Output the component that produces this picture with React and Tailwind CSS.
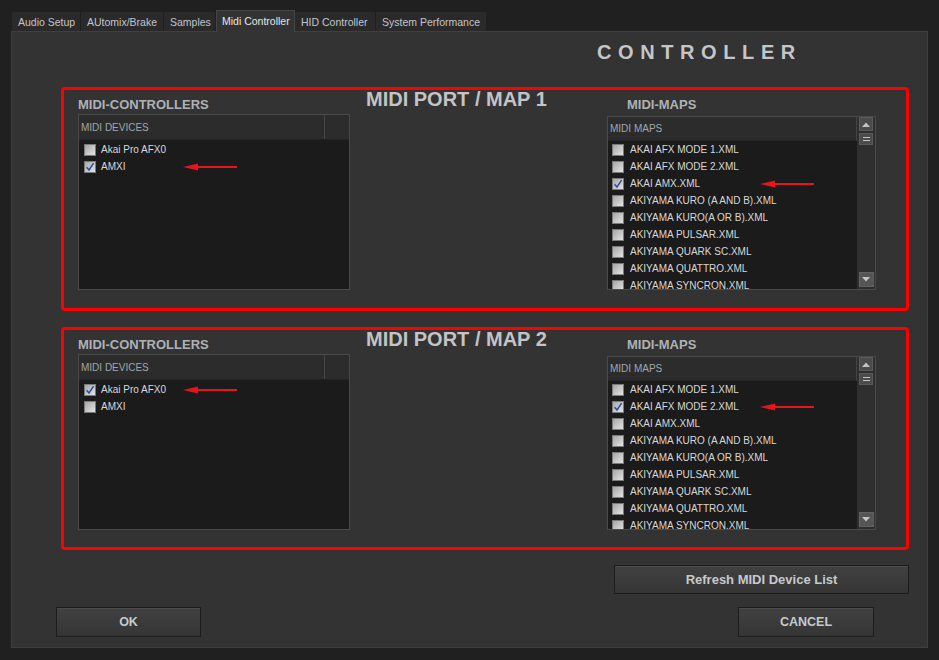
import React from "react";

const TABS = [
  { label: "Audio Setup", w: "w-[69px]" },
  { label: "AUtomix/Brake", w: "w-[83px]" },
  { label: "Samples", w: "w-[52px]" },
  { label: "Midi Controller", w: "w-[79px]", active: true },
  { label: "HID Controller", w: "w-[81px]" },
  { label: "System Performance", w: "w-[111px]" },
];

const MAPS = [
  "AKAI AFX MODE 1.XML",
  "AKAI AFX MODE 2.XML",
  "AKAI AMX.XML",
  "AKIYAMA KURO (A AND B).XML",
  "AKIYAMA KURO(A OR B).XML",
  "AKIYAMA PULSAR.XML",
  "AKIYAMA QUARK SC.XML",
  "AKIYAMA QUATTRO.XML",
  "AKIYAMA SYNCRON.XML",
];

const DEVICES = ["Akai Pro AFX0", "AMXI"];

function Check({ checked }) {
  return (
    <span className="w-[12px] h-[12px] shrink-0 border border-[#7a7a7a] bg-linear-to-br from-[#a6a6a6] to-[#e4e4e4] flex items-center justify-center">
      {checked && (
        <svg width="10" height="10" viewBox="0 0 10 10">
          <path d="M1.6 5.2 L4 8 L8.6 1.2" stroke="#2c4c9c" strokeWidth="1.4" fill="none" />
        </svg>
      )}
    </span>
  );
}

function Arrow({ className }) {
  return (
    <svg width="54" height="9" viewBox="0 0 54 9" className={className}>
      <polygon points="0,4.5 15,1 15,8" fill="#e8141c" />
      <rect x="14" y="3.5" width="40" height="2" fill="#e8141c" />
    </svg>
  );
}

function DeviceList({ checkedIndex }) {
  return (
    <div className="w-[272px] h-[176px] mt-[2px] border border-[#4a4a4a] bg-[#1b1b1b] flex flex-col">
      <div className="h-[25px] flex shrink-0 bg-[#2c2c2c] border-b border-[#242424]">
        <div className="w-[246px] flex items-center pl-[2px] border-r border-[#444] text-[10px] text-[#a2a6aa]">
          MIDI DEVICES
        </div>
        <div className="flex-1" />
      </div>
      <div className="flex flex-col pt-[1px]">
        {DEVICES.map((d, i) => (
          <div key={d} className="relative h-[17px] flex items-center pl-[5px] gap-[5px]">
            <Check checked={i === checkedIndex} />
            <span className="text-[10px] leading-[17px] text-[#d8d8d8]">{d}</span>
            {i === checkedIndex && (
              <Arrow className="absolute left-[104px] top-1/2 -translate-y-1/2" />
            )}
          </div>
        ))}
      </div>
    </div>
  );
}

function MapList({ checkedIndex }) {
  return (
    <div className="w-[269px] h-[174px] mt-[4px] border border-[#4a4a4a] bg-[#1b1b1b] flex">
      <div className="w-[249px] flex flex-col overflow-hidden">
        <div className="h-[24px] shrink-0 flex items-center pl-[2px] bg-[#2c2c2c] border-b border-[#242424] border-r border-r-[#444] text-[10px] text-[#a2a6aa]">
          MIDI MAPS
        </div>
        <div className="flex flex-col overflow-hidden">
          {MAPS.map((m, i) => (
            <div key={m} className="relative h-[17px] shrink-0 flex items-center pl-[4px] gap-[6px]">
              <Check checked={i === checkedIndex} />
              <span className="text-[10px] leading-[17px] text-[#d8d8d8] whitespace-nowrap">{m}</span>
              {i === checkedIndex && (
                <Arrow className="absolute left-[152px] top-1/2 -translate-y-1/2" />
              )}
            </div>
          ))}
        </div>
      </div>
      <div className="flex-1 bg-[#2f2f2f] flex flex-col items-center pb-[2px]">
        <div className="w-[14px] h-[14px] bg-[#4b4b4b] border border-[#5a5a5a] flex items-center justify-center">
          <svg width="8" height="5" viewBox="0 0 8 5">
            <polygon points="0,5 4,0.5 8,5" fill="#c4c4c4" />
          </svg>
        </div>
        <div className="w-[14px] h-[12px] mt-[2px] bg-[#4b4b4b] border border-[#5a5a5a] flex flex-col items-center justify-center gap-[2px]">
          <span className="w-[7px] h-px bg-[#c4c4c4]" />
          <span className="w-[7px] h-px bg-[#c4c4c4]" />
        </div>
        <div className="flex-1" />
        <div className="w-[15px] h-[15px] bg-[#555] border border-[#626262] flex items-center justify-center">
          <svg width="8" height="5" viewBox="0 0 8 5">
            <polygon points="0,0 8,0 4,4.5" fill="#c4c4c4" />
          </svg>
        </div>
      </div>
    </div>
  );
}

function PortBox({ n, devChecked, mapChecked, h }) {
  return (
    <div className={`ml-[49px] w-[848px] ${h} border-[3px] border-[#ff0000] rounded-[4px] flex`}>
      <div className="pl-[14px] pt-[7px] flex flex-col">
        <div className="text-[13px] leading-[15px] font-bold text-[#aeb2b6]">MIDI-CONTROLLERS</div>
        <DeviceList checkedIndex={devChecked} />
      </div>
      <div className="w-[257px] pl-[16px] -mt-[1px]">
        <div className="text-[20px] leading-[20px] font-bold text-[#c2c4c6] whitespace-nowrap">
          MIDI PORT / MAP {n}
        </div>
      </div>
      <div className="pt-[7px] flex flex-col">
        <div className="pl-[20px] text-[13px] leading-[15px] font-bold text-[#aeb2b6]">MIDI-MAPS</div>
        <MapList checkedIndex={mapChecked} />
      </div>
    </div>
  );
}

const btn =
  "border border-[#1c1c1c] bg-linear-to-b from-[#414141] to-[#353535] shadow-[inset_0_1px_0_#4b4b4b] text-[#c6cacd] font-bold flex items-center justify-center";

export default function App() {
  return (
    <div className="w-[939px] h-[660px] bg-[#202020] overflow-hidden font-['Liberation_Sans',Arial,sans-serif]">
      <div className="h-[31px] pl-[12px] flex items-end">
        {TABS.map((t) =>
          t.active ? (
            <div
              key={t.label}
              className={`${t.w} h-[22px] -mb-px relative z-10 bg-[#333333] border-t border-x border-[#454545] pl-[5px] pt-[2px] text-[10.5px] leading-[16px] text-[#e6e6e6] whitespace-nowrap`}
            >
              {t.label}
            </div>
          ) : (
            <div
              key={t.label}
              className={`${t.w} h-[19px] bg-[#2a2a2a] border-r border-[#1f1f1f] pl-[6px] pt-[2px] text-[10.5px] leading-[16px] text-[#c2c6ca] whitespace-nowrap`}
            >
              {t.label}
            </div>
          )
        )}
      </div>
      <div className="ml-[11px] w-[917px] h-[617px] bg-[#333333] border border-[#3f3f3f] flex flex-col">
        <div className="mt-[10px] pl-[585px] text-[20px] leading-[20px] font-bold tracking-[6.6px] text-[#c4c6c8]">
          CONTROLLER
        </div>
        <div className="mt-[25px]">
          <PortBox n={1} devChecked={1} mapChecked={2} h="h-[224px]" />
        </div>
        <div className="mt-[16px]">
          <PortBox n={2} devChecked={0} mapChecked={1} h="h-[223px]" />
        </div>
        <div className="mt-[15px] ml-[602px]">
          <div className={`${btn} w-[295px] h-[29px] text-[13px]`}>Refresh MIDI Device List</div>
        </div>
        <div className="mt-[13px] flex">
          <div className={`${btn} ml-[44px] w-[145px] h-[30px] text-[12.5px]`}>OK</div>
          <div className={`${btn} ml-[537px] w-[136px] h-[30px] text-[12.5px]`}>CANCEL</div>
        </div>
      </div>
    </div>
  );
}
